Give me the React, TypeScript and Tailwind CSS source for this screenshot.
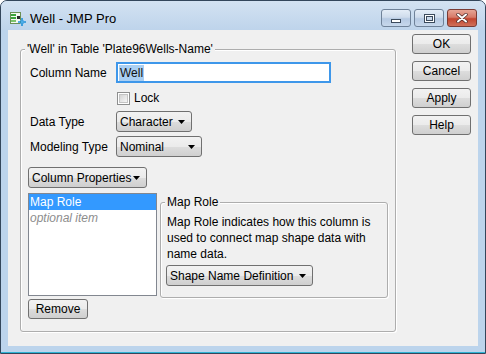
import React from "react"

const btnBg = "bg-[linear-gradient(to_bottom,#f2f2f2_0%,#ebebeb_50%,#dddddd_51%,#cfcfcf_100%)]"

function Arrow(){
    return <svg width="7" height="4" viewBox="0 0 7 4" className="shrink-0"><path d="M0 0h7L3.5 4z" fill="#000" /></svg>
}

function Drop({label,w}:{label:string,w:string}){
    return <div className={`${w} h-[21px] flex items-center justify-between pl-[3px] pr-[6px] border border-[#707070] rounded-[3px] ${btnBg}`}>
        <span>{label}</span>
        <Arrow />
    </div>
}

function Btn({label,w}:{label:string,w?:string}){
    return <div className={`${w ?? "w-full"} h-[20px] flex items-center justify-center border border-[#707070] rounded-[3px] ${btnBg}`}>{label}</div>
}

function AppIcon(){
    return <svg width="16" height="14" viewBox="0 0 16 14">
        <rect x="0.5" y="0.5" width="10" height="11" fill="#f4f8f0" stroke="#6b8f55" />
        <rect x="1" y="2" width="5" height="2" fill="#3aa33a" />
        <rect x="1" y="5" width="5" height="2" fill="#3aa33a" />
        <rect x="1" y="8" width="5" height="2" fill="#7cc46a" />
        <rect x="7" y="4" width="3" height="3" fill="#2a2a2a" />
        <path d="M12 6v8M8 10h8" stroke="#1e8fd8" strokeWidth="1.6" />
        <path d="M10 8l4 4M14 8l-4 4" stroke="#55b5ee" strokeWidth="0.8" />
    </svg>
}

function WinBtn({kind}:{kind:"min"|"max"|"close"}){
    if(kind==="close"){
        return <div className="w-[30px] h-[18px] rounded-[3px] border border-[#7a3b34] bg-[linear-gradient(to_bottom,#e6a595_0%,#d77a68_45%,#c2452f_55%,#d0705a_100%)] flex items-center justify-center">
            <svg width="12" height="10" viewBox="0 0 12 10">
                <path d="M2 1.5l8 7M10 1.5l-8 7" stroke="#4a2a28" strokeWidth="3.4" strokeLinecap="round" />
                <path d="M2 1.5l8 7M10 1.5l-8 7" stroke="#fff" strokeWidth="2" strokeLinecap="round" />
            </svg>
        </div>
    }
    return <div className="w-[30px] h-[18px] rounded-[3px] border border-[#6f8299] bg-[linear-gradient(to_bottom,#e4edf7_0%,#cfdcec_45%,#b5c9e2_55%,#c7d8ec_100%)] flex items-center justify-center">
        {kind==="min"
            ? <div className="mt-[6px] w-[10px] h-[4px] bg-white border border-[#3b4a5c]" />
            : <div className="w-[11px] h-[9px] border border-[#3b4a5c] bg-white p-[1px]"><div className="w-full h-full border border-[#3b4a5c] bg-[#c9d8ea]" /></div>}
    </div>
}

export default function App(){
    return <div className="w-[486px] h-[354px] flex flex-col border border-[#33465b] rounded-t-[7px] bg-[#bcd4ec] font-['Liberation_Sans',Arial,sans-serif] text-[12px] leading-[16px] text-black overflow-hidden">
        <div className="h-[29px] flex items-start bg-[linear-gradient(to_bottom,#d3e2f2_0%,#bed4eb_100%)]">
            <div className="ml-[9px] mt-[11px]"><AppIcon /></div>
            <div className="ml-[4px] mt-[10px] text-[13px]">Well - JMP Pro</div>
            <div className="ml-auto mr-[8px] mt-[8px] flex gap-[3px]">
                <WinBtn kind="min" />
                <WinBtn kind="max" />
                <WinBtn kind="close" />
            </div>
        </div>

        <div className="mx-[7px] h-[316px] bg-[#f0f0f0] flex">
            <div className="ml-[12px] mt-[19px] w-[376px] h-[283px] border border-[#adadad] rounded-[3px] shadow-[1px_1px_0_#fff,inset_1px_1px_0_#fff]">
                <div className="-mt-[9px] ml-[4px] px-[2px] w-fit bg-[#f0f0f0]">'Well' in Table 'Plate96Wells-Name'</div>
                <div className="pl-[7px] flex flex-col items-start">
                    <div className="mt-[5px] pl-[2px] flex items-center">
                        <span className="w-[86px]">Column Name</span>
                        <div className="w-[215px] h-[21px] border-2 border-[#3e97ea] bg-white flex items-center pl-[1px]">
                            <span className="bg-[#a9cff3] px-[1px] text-[#111]">Well</span>
                        </div>
                    </div>
                    <div className="mt-[7px] h-[16px] pl-[89px] flex items-center">
                        <div className="w-[13px] h-[13px] border border-[#8e8f8f] bg-white p-[1px]">
                            <div className="w-full h-full bg-[linear-gradient(135deg,#d4d4d4,#f6f6f6)] border border-[#c4c4c4]" />
                        </div>
                        <span className="ml-[4px]">Lock</span>
                    </div>
                    <div className="mt-[5px] pl-[2px] flex items-center">
                        <span className="w-[86px]">Data Type</span>
                        <Drop label="Character" w="w-[76px]" />
                    </div>
                    <div className="mt-[4px] pl-[2px] flex items-center">
                        <span className="w-[86px]">Modeling Type</span>
                        <Drop label="Nominal" w="w-[86px]" />
                    </div>
                    <div className="mt-[10px]">
                        <Drop label="Column Properties" w="w-[119px]" />
                    </div>
                    <div className="mt-[5px] flex items-start">
                        <div className="w-[129px] h-[103px] border border-[#828790] bg-white">
                            <div className="h-[16px] bg-[#3399ff] text-white pl-[1px]">Map Role</div>
                            <div className="h-[16px] pl-[1px] italic text-[#8d8d8d]">optional item</div>
                        </div>
                        <div className="ml-[3px] mt-[9px] w-[228px] h-[96px] border border-[#adadad] rounded-[3px] shadow-[1px_1px_0_#fff,inset_1px_1px_0_#fff]">
                            <div className="-mt-[9px] ml-[4px] px-[2px] w-fit bg-[#f0f0f0]">Map Role</div>
                            <div className="mt-[4px] pl-[6px]">
                                <div>Map Role indicates how this column is</div>
                                <div>used to connect map shape data with</div>
                                <div>name data.</div>
                            </div>
                            <div className="mt-[3px] ml-[5px]">
                                <Drop label="Shape Name Definition" w="w-[147px]" />
                            </div>
                        </div>
                    </div>
                    <div className="mt-[1px]">
                        <Btn label="Remove" w="w-[60px]" />
                    </div>
                </div>
            </div>
            <div className="ml-[16px] mt-[4px] w-[59px] flex flex-col gap-[7px]">
                <Btn label="OK" />
                <Btn label="Cancel" />
                <Btn label="Apply" />
                <Btn label="Help" />
            </div>
        </div>
        <div className="flex-1 border-b border-[#2fb3d4]" />
    </div>
}
